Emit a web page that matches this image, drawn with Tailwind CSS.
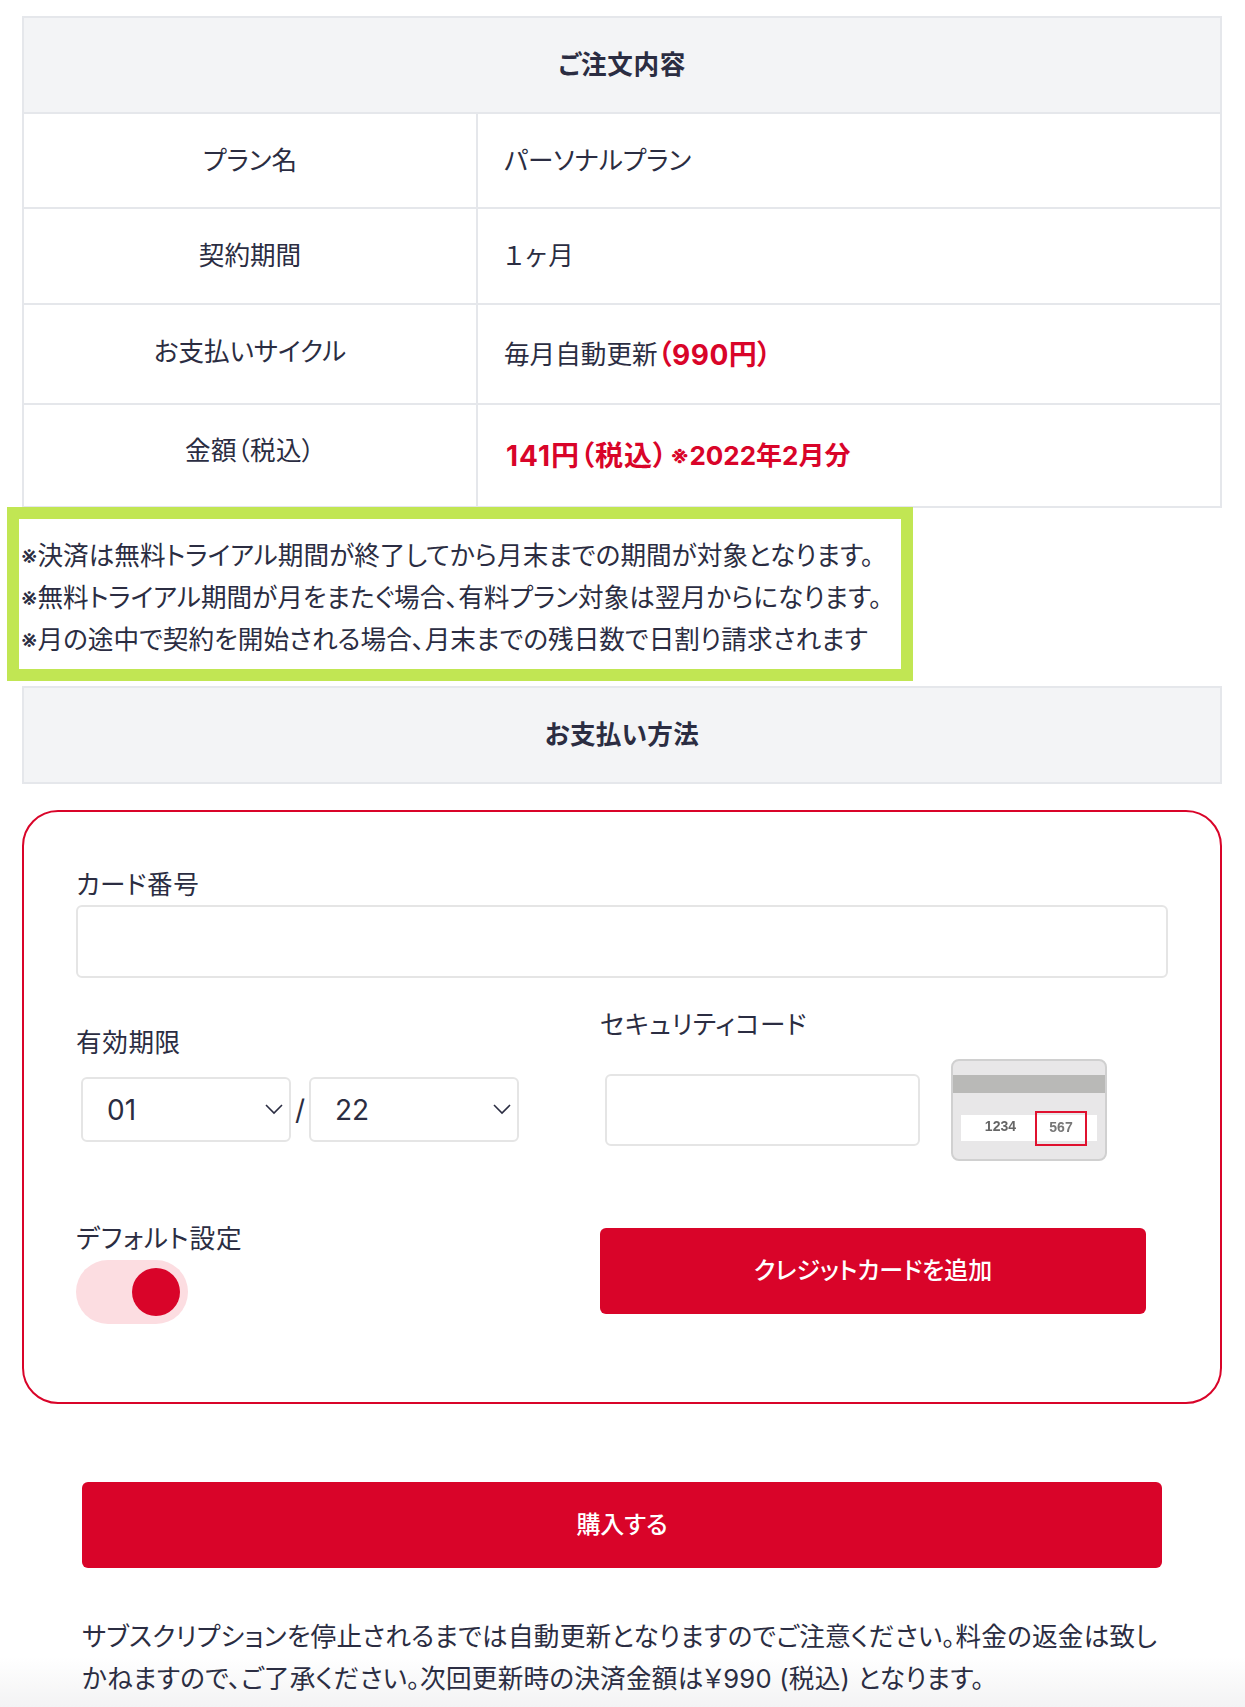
<!DOCTYPE html>
<html lang="ja">
<head>
  <meta charset="UTF-8">
  <meta name="viewport" content="width=device-width, initial-scale=1.0">
  <title>ご注文内容</title>
  <script src="https://cdn.jsdelivr.net/npm/@tailwindcss/browser@4"></script>
</head>
<body class="bg-white">
  <div class="relative w-[1245px] h-[1707px] overflow-hidden pt-[16px] pl-[22px] text-[25.6px] text-[#2b2d42] font-['Inter','Noto_Sans_CJK_JP',sans-serif] [font-feature-settings:'palt']">

    <!-- 下端のフェード -->
    <div class="absolute inset-x-0 bottom-0 h-[50px] bg-gradient-to-b from-white to-[#f3f3f4]"></div>

    <!-- ご注文内容 -->
    <div class="relative w-[1200px]">
      <div class="h-[98px] flex items-center justify-center bg-[#f3f4f6] border-2 border-[#e5e7eb] font-bold tracking-[0.6px]">ご注文内容</div>
      <div class="flex h-[95px] border-x-2 border-b-2 border-[#e5e7eb]">
        <div class="w-[454px] flex items-center justify-center border-r-2 border-[#e5e7eb] pt-[1px]">プラン名</div>
        <div class="pl-[26px] flex items-center pt-[1px]">パーソナルプラン</div>
      </div>
      <div class="flex h-[96px] border-x-2 border-b-2 border-[#e5e7eb]">
        <div class="w-[454px] flex items-center justify-center border-r-2 border-[#e5e7eb]">契約期間</div>
        <div class="pl-[26px] flex items-center tracking-[2px]">１ヶ月</div>
      </div>
      <div class="flex h-[100px] border-x-2 border-b-2 border-[#e5e7eb]">
        <div class="w-[454px] flex items-center justify-center border-r-2 border-[#e5e7eb] pb-[4px]">お支払いサイクル</div>
        <div class="pl-[26px] flex items-center pt-[2px]">毎月自動更新<span class="text-[28px] font-bold text-[#d90429] tracking-[0.5px]">（990円）</span></div>
      </div>
      <div class="flex h-[103px] border-x-2 border-b-2 border-[#e5e7eb]">
        <div class="w-[454px] flex items-center justify-center border-r-2 border-[#e5e7eb] pb-[8px] tracking-[0.3px]">金額（税込）</div>
        <div class="pl-[28px] flex items-center text-[28px] font-bold text-[#d90429]"><span class="tracking-[1px]">141円（税込）</span><span class="text-[24px] ml-[2px]">※</span><span class="text-[26px]">2022年2月分</span></div>
      </div>
    </div>

    <!-- 注意書き -->
    <div class="relative ml-[-15px] mt-[-1px] w-[906px] h-[174px] border-[12px] border-[#c1e653] bg-white flex flex-col justify-center leading-[42px] pl-[2px] pt-[8px] whitespace-nowrap tracking-[0.05px]">
      <p>※決済は無料トライアル期間が終了してから月末までの期間が対象となります。</p>
      <p>※無料トライアル期間が月をまたぐ場合、有料プラン対象は翌月からになります。</p>
      <p>※月の途中で契約を開始される場合、月末までの残日数で日割り請求されます</p>
    </div>

    <!-- お支払い方法 -->
    <div class="mt-[5px] w-[1200px] h-[98px] flex items-center justify-center bg-[#f3f4f6] border-2 border-[#e5e7eb] font-bold tracking-[0.3px]">お支払い方法</div>

    <!-- カード入力 -->
    <div class="mt-[26px] w-[1200px] h-[594px] border-2 border-[#d90429] rounded-[36px] pt-[55px] px-[52px]">
      <div class="leading-[36px] tracking-[0.6px]">カード番号</div>
      <div class="mt-[2px] h-[73px] w-[1092px] border-2 border-[#e5e5e5] rounded-md"></div>

      <div class="mt-[28px] flex">
        <div class="w-[524px] pt-[19px]">
          <div class="leading-[36px] tracking-[0.6px]">有効期限</div>
          <div class="mt-[16px] ml-[5px] flex items-center">
            <div class="relative w-[210px]">
              <select class="w-full h-[65px] appearance-none bg-white border-2 border-[#e5e5e5] rounded-md pl-[24px] text-[28px]">
                <option>01</option>
              </select>
              <svg class="absolute right-[8px] top-[27px] w-[18px] h-[11px]" viewBox="0 0 18 11" fill="none" stroke="#2b2d42" stroke-width="1.6"><path d="M1 1l8 8 8-8"/></svg>
            </div>
            <span class="w-[18px] text-center text-[28px]">/</span>
            <div class="relative w-[210px]">
              <select class="w-full h-[65px] appearance-none bg-white border-2 border-[#e5e5e5] rounded-md pl-[24px] text-[28px]">
                <option>22</option>
              </select>
              <svg class="absolute right-[8px] top-[27px] w-[18px] h-[11px]" viewBox="0 0 18 11" fill="none" stroke="#2b2d42" stroke-width="1.6"><path d="M1 1l8 8 8-8"/></svg>
            </div>
          </div>
        </div>
        <div class="pt-[1px]">
          <div class="leading-[36px] tracking-[0.5px]">セキュリティコード</div>
          <div class="mt-[16px] ml-[5px] flex items-center">
            <div class="w-[315px] h-[72px] border-2 border-[#e5e5e5] rounded-md"></div>
            <!-- カード裏面 -->
            <div class="relative ml-[31px] w-[156px] h-[102px] rounded-lg bg-[#e8e7e8] border-2 border-[#d0d0d0] overflow-hidden blur-[0.7px]">
              <div class="mt-[14px] h-[18px] bg-[#b9b9b7]"></div>
              <div class="mt-[22px] mx-[8px] h-[26px] bg-white flex items-center pb-[3px] text-[14px] font-bold text-[#666] font-['Liberation_Sans',sans-serif]">
                <span class="w-[55px] text-right blur-[0.5px]">1234</span>
              </div>
              <div class="absolute left-[82px] top-[50px] w-[52px] h-[35px] border-2 border-[#e0112f] flex items-center justify-center pb-[3px] text-[14px] font-bold text-[#777] font-['Liberation_Sans',sans-serif]"><span class="blur-[0.5px]">567</span></div>
            </div>
          </div>
        </div>
      </div>

      <div class="mt-[59px] flex">
        <div class="w-[524px]">
          <div class="leading-[36px] tracking-[0.9px] pt-[1px] h-[36px]">デフォルト設定</div>
          <div class="mt-[4px] w-[112px] h-[64px] rounded-full bg-[#fcdde1] flex items-center justify-end pr-[8px]">
            <div class="w-[48px] h-[48px] rounded-full bg-[#d90429]"></div>
          </div>
        </div>
        <div class="pt-[8px]">
          <button class="w-[546px] h-[86px] rounded-md bg-[#d90429] text-white text-[24px] font-medium">クレジットカードを追加</button>
        </div>
      </div>
    </div>

    <!-- 購入 -->
    <button class="block mt-[78px] ml-[60px] w-[1080px] h-[86px] rounded-md bg-[#d90429] text-white text-[24px] font-medium">購入する</button>
    <p class="relative mt-[48px] ml-[60px] w-[1090px] leading-[42px] whitespace-nowrap tracking-[0.25px]">サブスクリプションを停止されるまでは自動更新となりますのでご注意ください。料金の返金は致し<br>かねますので、ご了承ください。次回更新時の決済金額は￥990 (税込) となります。</p>
  </div>
</body>
</html>
